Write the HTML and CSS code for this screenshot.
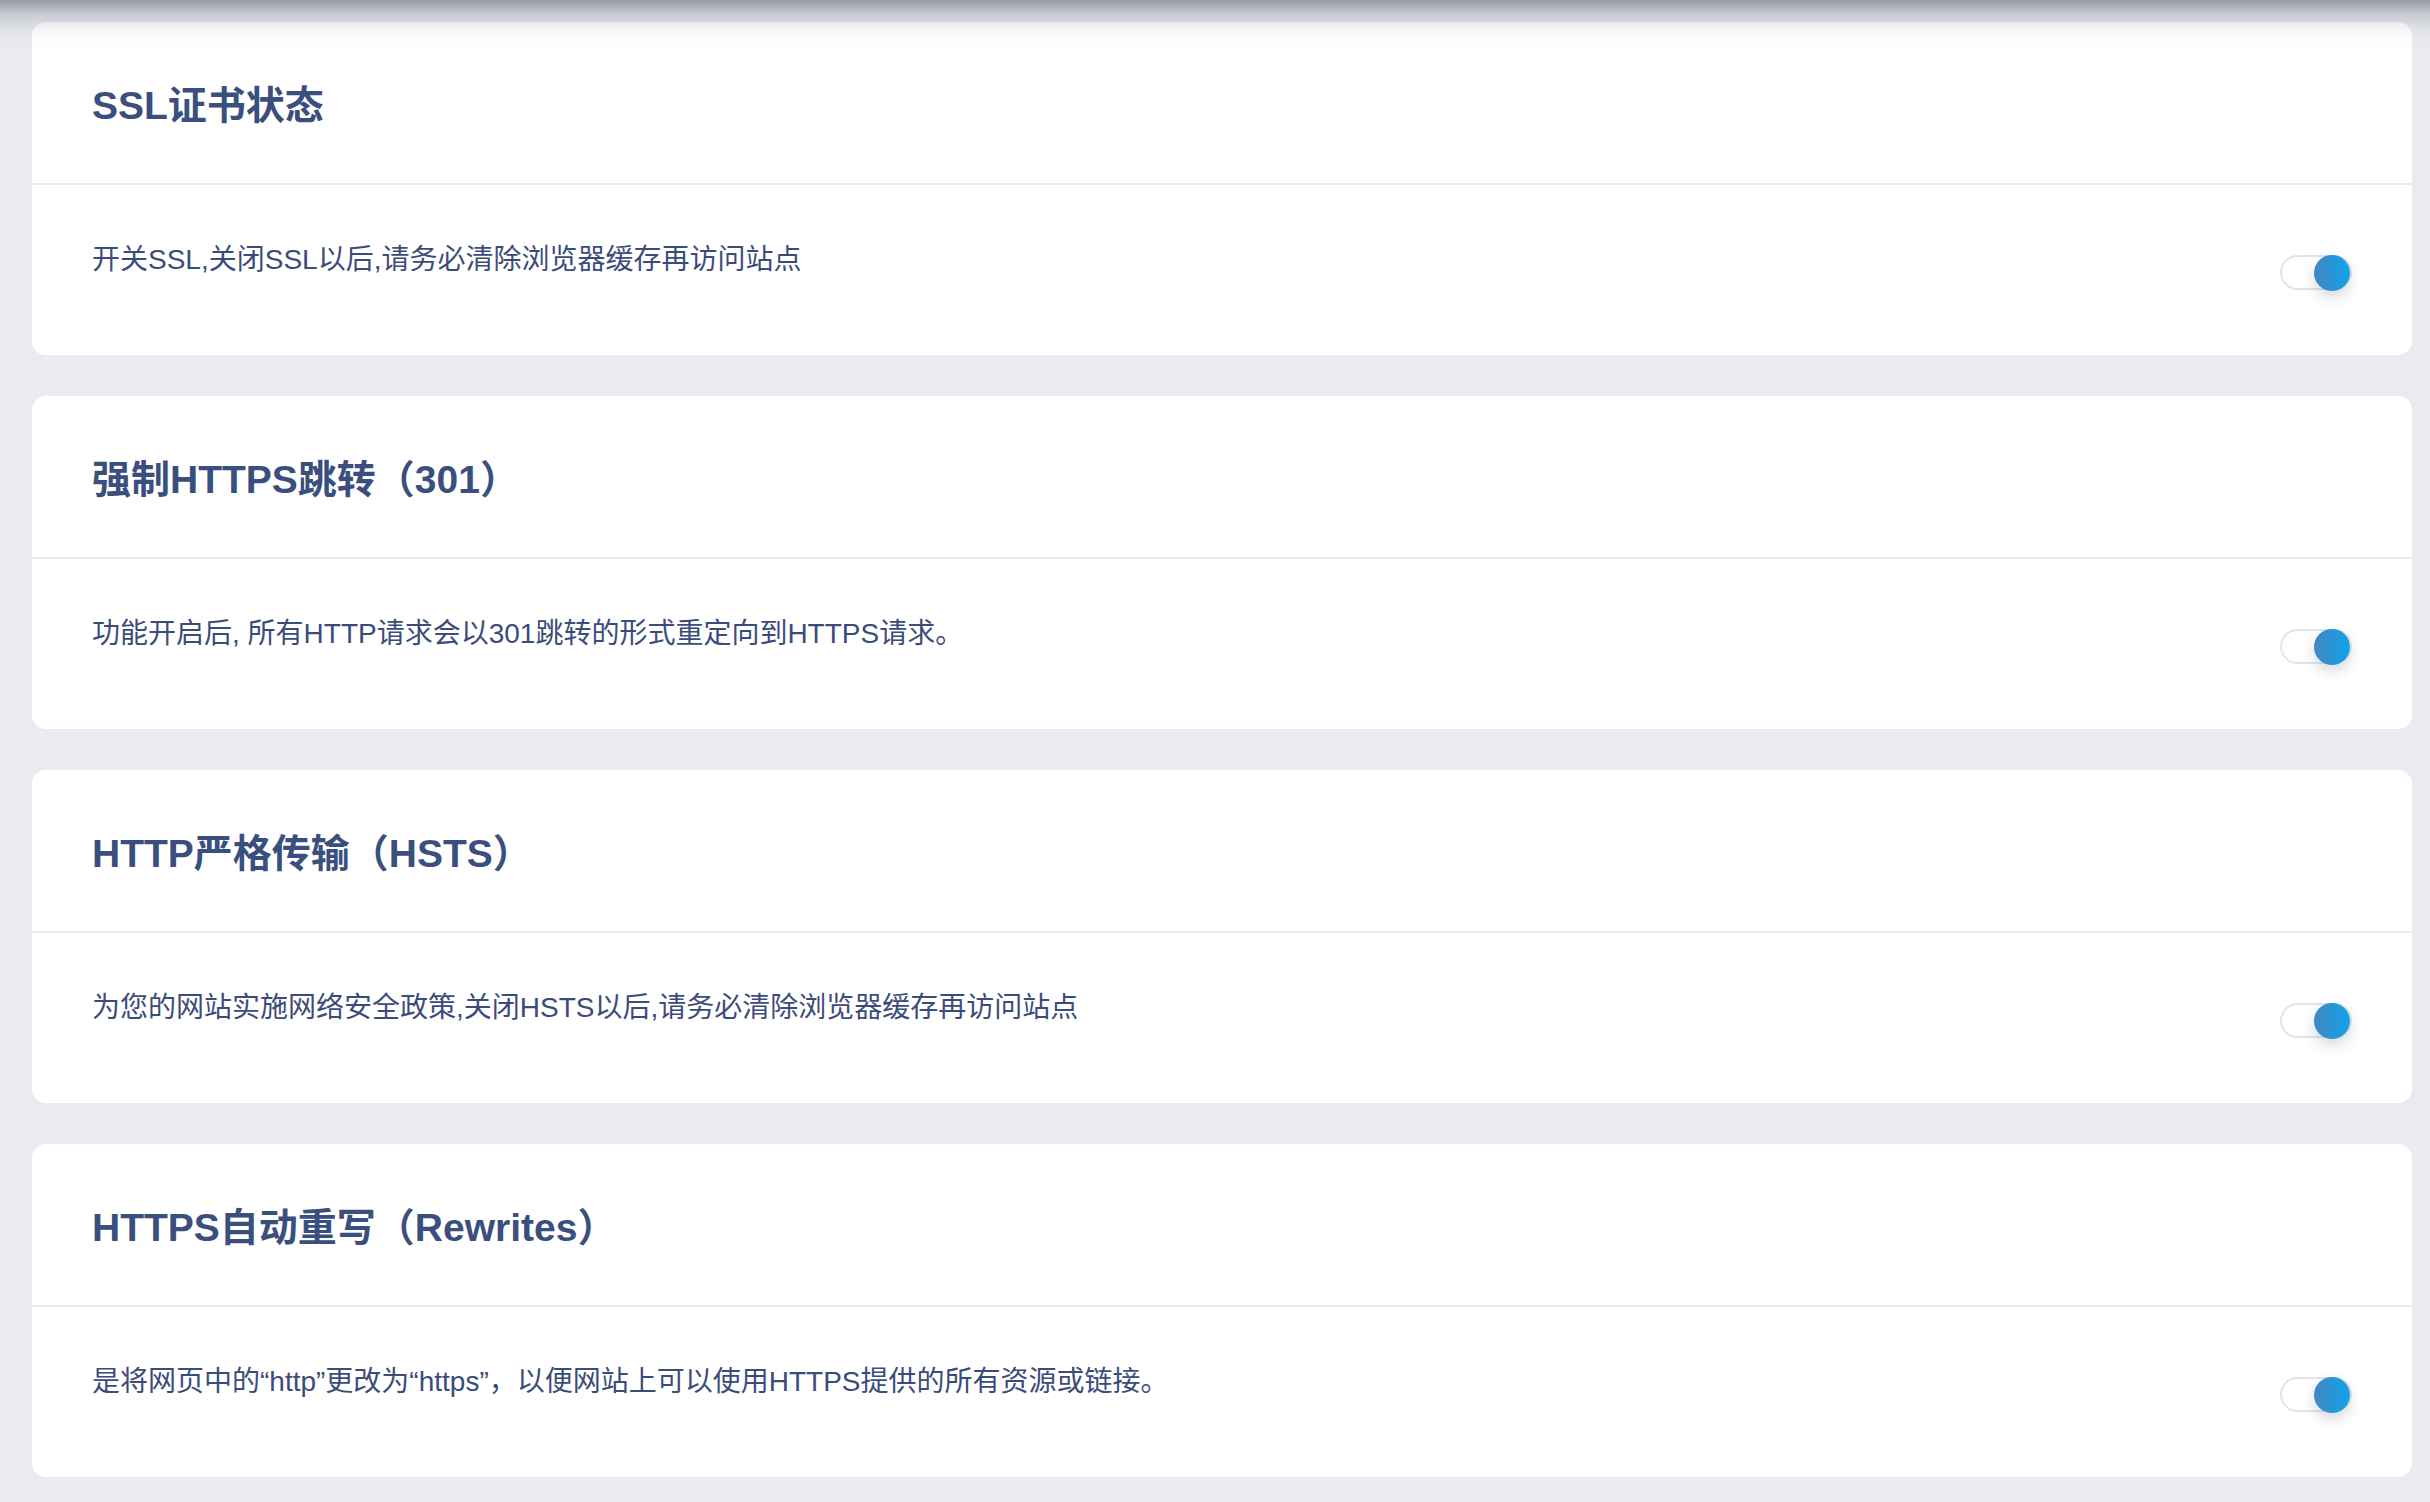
FILE: index.html
```html
<!DOCTYPE html>
<html lang="zh-CN">
<head>
    <meta charset="UTF-8">
    <meta name="viewport" content="width=device-width, initial-scale=1.0">
    <title>SSL设置</title>
    <link rel="stylesheet" href="styles.css">
</head>
<body>

    <div class="top-shade"></div>

    <div class="panel">
        <div class="panel-head"><h2>SSL证书状态</h2></div>
        <div class="panel-body">
            <p>开关SSL,关闭SSL以后,请务必清除浏览器缓存再访问站点</p>
            <label class="switch"><input type="checkbox" checked><span class="knob"></span></label>
        </div>
    </div>

    <div class="panel">
        <div class="panel-head"><h2>强制HTTPS跳转（301）</h2></div>
        <div class="panel-body">
            <p>功能开启后, 所有HTTP请求会以301跳转的形式重定向到HTTPS请求。</p>
            <label class="switch"><input type="checkbox" checked><span class="knob"></span></label>
        </div>
    </div>

    <div class="panel">
        <div class="panel-head"><h2>HTTP严格传输（HSTS）</h2></div>
        <div class="panel-body">
            <p>为您的网站实施网络安全政策,关闭HSTS以后,请务必清除浏览器缓存再访问站点</p>
            <label class="switch"><input type="checkbox" checked><span class="knob"></span></label>
        </div>
    </div>

    <div class="panel">
        <div class="panel-head"><h2>HTTPS自动重写（Rewrites）</h2></div>
        <div class="panel-body">
            <p>是将网页中的“http”更改为“https”，以便网站上可以使用HTTPS提供的所有资源或链接。</p>
            <label class="switch"><input type="checkbox" checked><span class="knob"></span></label>
        </div>
    </div>

</body>
</html>
```

FILE: styles.css
```css
html, body {
    margin: 0;
    height: 100%;
}
body {
    font-family: "Liberation Sans", "Noto Sans CJK SC", sans-serif;
    background-color: #e9ebf0;
    color: #3b4d7c;
    padding: 22px 18px 0 32px;
    box-sizing: border-box;
    overflow: hidden;
}
.top-shade {
    position: fixed;
    top: 0;
    left: 0;
    right: 0;
    height: 50px;
    background: linear-gradient(rgba(50, 54, 72, 0.45), rgba(50, 54, 72, 0.18) 14px, rgba(50, 54, 72, 0.04) 30px, rgba(50, 54, 72, 0) 50px);
    pointer-events: none;
}
.panel {
    background-color: #fff;
    border-radius: 14px;
    margin-bottom: 41px;
}
.panel-head {
    height: 161px;
    display: flex;
    align-items: center;
    padding: 0 60px;
    border-bottom: 2px solid #e9ebf0;
}
.panel-head h2 {
    margin: 0 0 2px 0;
    font-size: 39px;
    font-weight: 700;
    color: #3a4f7e;
}
.panel-body {
    height: 170px;
    display: flex;
    align-items: center;
    justify-content: space-between;
    padding: 0 60px;
}
.panel-body p {
    margin: 0 0 26px 0;
    font-size: 28px;
    color: #3c4c7a;
}
.switch {
    position: relative;
    display: block;
    width: 72px;
    height: 35px;
    margin-top: 5px;
}
.switch input {
    display: none;
}
.switch::before {
    content: "";
    position: absolute;
    inset: 0;
    border: 2px solid #e1e5ea;
    border-radius: 18px;
    background: #fff;
}
.knob {
    position: absolute;
    top: 0;
    right: 2px;
    width: 36px;
    height: 36px;
    border-radius: 50%;
    background: linear-gradient(90deg, #4486c0, #10a3ec);
    box-shadow: 0 6px 14px rgba(30, 40, 60, 0.18);
}
```
